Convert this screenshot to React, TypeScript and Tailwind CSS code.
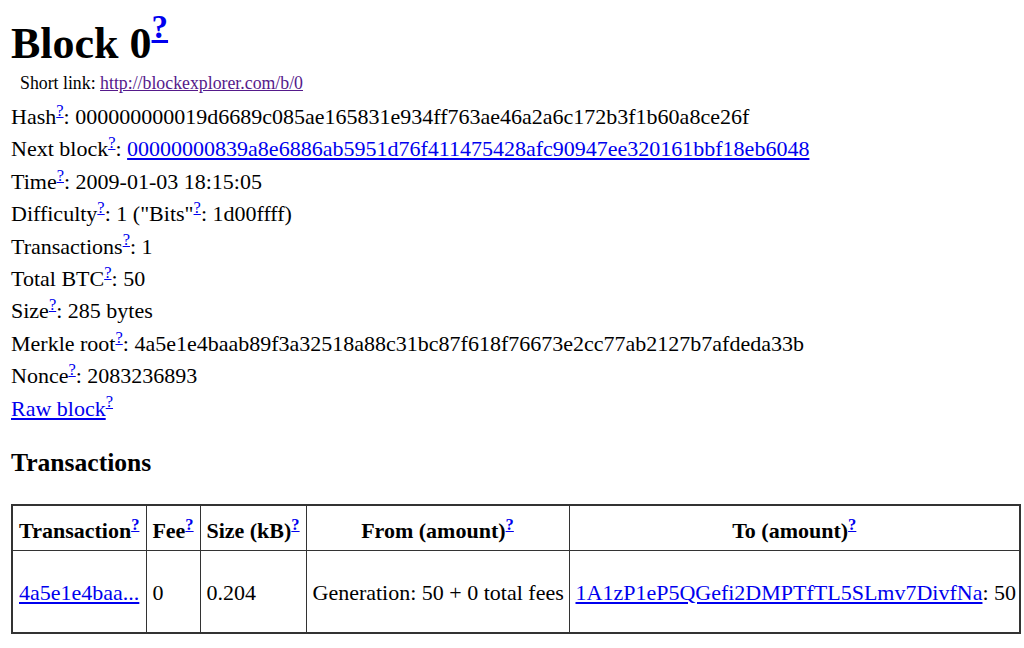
const LINK = "text-[#0000ee] underline"

function Help() {
  return (
    <sup>
      <a href="#" className={LINK}>
        ?
      </a>
    </sup>
  )
}

export default function App() {
  return (
    <div
      className="min-h-screen bg-white px-[11px] pt-[20px] text-black"
      style={{ fontFamily: '"Liberation Serif", "Times New Roman", serif' }}
    >
      {/* Title */}
      <h1 className="text-[44px] font-bold leading-[47px]">
        Block 0
        <sup className="-top-[0.6em]">
          <a href="#" className={LINK}>
            ?
          </a>
        </sup>
      </h1>
      <div className="mt-[5px] pl-[9px] text-[17.8px] leading-[22px]">
        Short link:{" "}
        <a href="#" className="text-[#551a8b] underline">
          http://blockexplorer.com/b/0
        </a>
      </div>

      {/* Block details */}
      <div className="mt-[7px] text-[22px] leading-[32.4px]">
        <div>
          Hash<Help />: 000000000019d6689c085ae165831e934ff763ae46a2a6c172b3f1b60a8ce26f
        </div>
        <div>
          Next block<Help />:{" "}
          <a href="#" className={LINK}>
            00000000839a8e6886ab5951d76f411475428afc90947ee320161bbf18eb6048
          </a>
        </div>
        <div>
          Time<Help />: 2009-01-03 18:15:05
        </div>
        <div>
          Difficulty<Help />: 1 ("Bits"<Help />: 1d00ffff)
        </div>
        <div>
          Transactions<Help />: 1
        </div>
        <div>
          Total BTC<Help />: 50
        </div>
        <div>
          Size<Help />: 285 bytes
        </div>
        <div>
          Merkle root<Help />: 4a5e1e4baab89f3a32518a88c31bc87f618f76673e2cc77ab2127b7afdeda33b
        </div>
        <div>
          Nonce<Help />: 2083236893
        </div>
        <div>
          <a href="#" className={LINK}>
            Raw block
          </a>
          <Help />
        </div>
      </div>

      {/* Transactions */}
      <h3 className="mt-[24px] text-[25.6px] font-bold leading-[28px]">Transactions</h3>
      <table className="mt-[27px] w-[1008px] table-fixed border-collapse border-2 border-[#333] text-[22px] leading-[24px]">
        <colgroup>
          <col className="w-[134px]" />
          <col className="w-[54px]" />
          <col className="w-[106px]" />
          <col className="w-[263px]" />
          <col className="w-[451px]" />
        </colgroup>
        <thead>
          <tr>
            <th className="border border-[#333] px-[5px] pb-[7px] pt-[13px] text-center font-bold whitespace-nowrap">
              Transaction<Help />
            </th>
            <th className="border border-[#333] px-[5px] pb-[7px] pt-[13px] text-center font-bold whitespace-nowrap">
              Fee<Help />
            </th>
            <th className="border border-[#333] px-[5px] pb-[7px] pt-[13px] text-center font-bold whitespace-nowrap">
              Size (kB)<Help />
            </th>
            <th className="border border-[#333] px-[5px] pb-[7px] pt-[13px] text-center font-bold whitespace-nowrap">
              From (amount)<Help />
            </th>
            <th className="border border-[#333] px-[5px] pb-[7px] pt-[13px] text-center font-bold whitespace-nowrap">
              To (amount)<Help />
            </th>
          </tr>
        </thead>
        <tbody>
          <tr>
            <td className="border border-[#333] px-[6px] pb-[27px] pt-[30px] whitespace-nowrap">
              <a href="#" className={LINK}>
                4a5e1e4baa...
              </a>
            </td>
            <td className="border border-[#333] px-[6px] pb-[27px] pt-[30px]">0</td>
            <td className="border border-[#333] px-[6px] pb-[27px] pt-[30px]">0.204</td>
            <td className="border border-[#333] px-[6px] pb-[27px] pt-[30px] whitespace-nowrap">
              Generation: 50 + 0 total fees
            </td>
            <td className="border border-[#333] px-[6px] pb-[27px] pt-[30px] whitespace-nowrap">
              <a href="#" className={LINK}>
                1A1zP1eP5QGefi2DMPTfTL5SLmv7DivfNa
              </a>
              : 50
            </td>
          </tr>
        </tbody>
      </table>
    </div>
  )
}
